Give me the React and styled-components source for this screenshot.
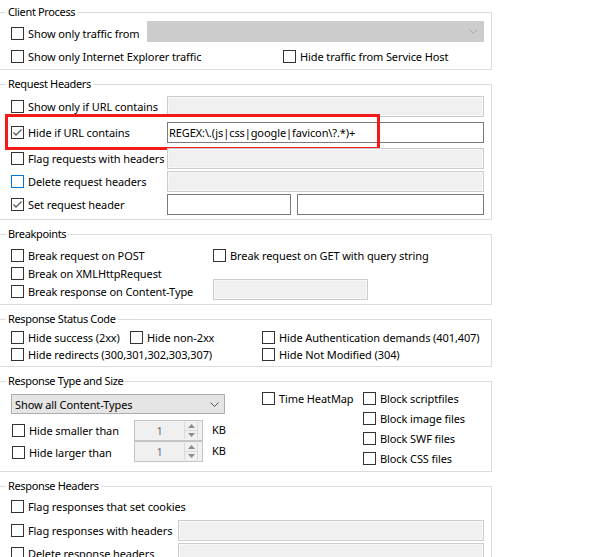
import React from 'react'
import styled, { createGlobalStyle } from 'styled-components'

const GlobalStyle = createGlobalStyle`
    body {
        margin: 0;
        background: #ffffff;
        font-family: "Noto Sans", "DejaVu Sans", sans-serif;
        font-size: 11px;
        letter-spacing: -0.1px;
        color: #000000;
    }
`

function Check({checked, focus}) {
    return (
        <Box $focus={focus}>
            {checked && (
                <svg width="11" height="11" viewBox="0 0 11 11">
                    <polyline points="1.5,5.5 4,8 9.5,2.5" fill="none" stroke="#5a5a5a" strokeWidth="1.3"/>
                </svg>
            )}
        </Box>
    )
}

function CheckLabel({w, checked, focus, top, children}) {
    return (
        <Label $w={w} $top={top}>
            <Check checked={checked} focus={focus}/>
            <span>{children}</span>
        </Label>
    )
}

function Chevron({color}) {
    return (
        <svg width="9" height="5" viewBox="0 0 9 5">
            <polyline points="0.5,0.5 4.5,4.5 8.5,0.5" fill="none" stroke={color} strokeWidth="1"/>
        </svg>
    )
}

function Spinner({value}) {
    return (
        <Spin>
            <SpinValue>{value}</SpinValue>
            <SpinButtons>
                <SpinHalf>
                    <svg width="7" height="4" viewBox="0 0 7 4"><polygon points="0,4 3.5,0 7,4" fill="#8c8c8c"/></svg>
                </SpinHalf>
                <SpinHalf>
                    <svg width="7" height="4" viewBox="0 0 7 4"><polygon points="0,0 3.5,4 7,0" fill="#8c8c8c"/></svg>
                </SpinHalf>
            </SpinButtons>
        </Spin>
    )
}

function App() {
    return (
        <>
            <GlobalStyle/>
            <Page>
                <Group>
                    <Title>Client Process</Title>
                    <Body $pb={6}>
                        <Row $h={21} $mt={2}>
                            <CheckLabel w={136} top={4}>Show only traffic from</CheckLabel>
                            <Combo><Chevron color="#a9a9a9"/></Combo>
                        </Row>
                        <Row $h={13} $mt={8}>
                            <CheckLabel w={272}>Show only Internet Explorer traffic</CheckLabel>
                            <CheckLabel>Hide traffic from Service Host</CheckLabel>
                        </Row>
                    </Body>
                </Group>

                <Group>
                    <Title>Request Headers</Title>
                    <Body $pb={4}>
                        <Row $h={21} $mt={5}>
                            <CheckLabel w={156}>Show only if URL contains</CheckLabel>
                            <Field $disabled/>
                        </Row>
                        <Row $h={21} $mt={5}>
                            <CheckLabel w={156} checked>Hide if URL contains</CheckLabel>
                            <Field>REGEX:\.(js|css|google|favicon\?.*)+</Field>
                            <Highlight/>
                        </Row>
                        <Row $h={21} $mt={5}>
                            <CheckLabel w={156}>Flag requests with headers</CheckLabel>
                            <Field $disabled/>
                        </Row>
                        <Row $h={21} $mt={2}>
                            <CheckLabel w={156} focus>Delete request headers</CheckLabel>
                            <Field $disabled/>
                        </Row>
                        <Row $h={21} $mt={2}>
                            <CheckLabel w={156} checked>Set request header</CheckLabel>
                            <Field $w={124}/>
                            <Field $ml={6}/>
                        </Row>
                    </Body>
                </Group>

                <Group>
                    <Title>Breakpoints</Title>
                    <Body $pb={4}>
                        <Row $h={17} $mt={6}>
                            <CheckLabel w={202}>Break request on POST</CheckLabel>
                            <CheckLabel>Break request on GET with query string</CheckLabel>
                        </Row>
                        <Row $h={17} $mt={1}>
                            <CheckLabel w={202}>Break on XMLHttpRequest</CheckLabel>
                        </Row>
                        <Row $h={21} $mt={-3}>
                            <CheckLabel w={202} top={4}>Break response on Content-Type</CheckLabel>
                            <Field $disabled $w={155}/>
                        </Row>
                    </Body>
                </Group>

                <Group>
                    <Title>Response Status Code</Title>
                    <Body $pb={3}>
                        <Row $h={17} $mt={3}>
                            <CheckLabel w={119}>Hide success (2xx)</CheckLabel>
                            <CheckLabel w={132}>Hide non-2xx</CheckLabel>
                            <CheckLabel>Hide Authentication demands (401,407)</CheckLabel>
                        </Row>
                        <Row $h={17}>
                            <CheckLabel w={251}>Hide redirects (300,301,302,303,307)</CheckLabel>
                            <CheckLabel>Hide Not Modified (304)</CheckLabel>
                        </Row>
                    </Body>
                </Group>

                <Group>
                    <Title>Response Type and Size</Title>
                    <Body $pb={3}>
                        <TypeGrid>
                            <Column>
                                <Select>
                                    <span>Show all Content-Types</span>
                                    <Chevron color="#505050"/>
                                </Select>
                                <Row $h={21} $mt={6} $ml={1}>
                                    <CheckLabel w={122}>Hide smaller than</CheckLabel>
                                    <Spinner value="1"/>
                                    <Unit>KB</Unit>
                                </Row>
                                <Row $h={21} $ml={1}>
                                    <CheckLabel w={122} top={2}>Hide larger than</CheckLabel>
                                    <Spinner value="1"/>
                                    <Unit>KB</Unit>
                                </Row>
                            </Column>
                            <Column>
                                <Row $h={20}>
                                    <CheckLabel>Time HeatMap</CheckLabel>
                                </Row>
                            </Column>
                            <Column>
                                <Row $h={20}><CheckLabel>Block scriptfiles</CheckLabel></Row>
                                <Row $h={20}><CheckLabel>Block image files</CheckLabel></Row>
                                <Row $h={20}><CheckLabel>Block SWF files</CheckLabel></Row>
                                <Row $h={20}><CheckLabel>Block CSS files</CheckLabel></Row>
                            </Column>
                        </TypeGrid>
                    </Body>
                </Group>

                <Group>
                    <Title>Response Headers</Title>
                    <Body $pb={8}>
                        <Row $h={17} $mt={5}>
                            <CheckLabel>Flag responses that set cookies</CheckLabel>
                        </Row>
                        <Row $h={21} $mt={5}>
                            <CheckLabel w={167}>Flag responses with headers</CheckLabel>
                            <Field $disabled/>
                        </Row>
                        <Row $h={21} $mt={2}>
                            <CheckLabel w={167}>Delete response headers</CheckLabel>
                            <Field $disabled/>
                        </Row>
                    </Body>
                </Group>
            </Page>
        </>
    )
}

const Page = styled.div`
    width: 493px;
    margin-left: -1px;
    padding-top: 12px;
`

const Group = styled.div`
    border: 1px solid #dcdcdc;
    & + & {
        margin-top: 14px;
    }
`

const Title = styled.div`
    display: table;
    margin: -8px 0 0 6px;
    padding: 0 2px;
    height: 14px;
    line-height: 14px;
    letter-spacing: -0.35px;
    background: #ffffff;
`

const Body = styled.div`
    padding: 0 7px ${p => p.$pb}px 11px;
`

const Row = styled.div`
    position: relative;
    display: flex;
    align-items: center;
    height: ${p => p.$h}px;
    margin-top: ${p => p.$mt || 0}px;
    margin-left: ${p => p.$ml || 0}px;
`

const Label = styled.label`
    display: flex;
    align-items: center;
    gap: 4px;
    flex-shrink: 0;
    width: ${p => (p.$w ? `${p.$w}px` : 'auto')};
    margin-top: ${p => p.$top || 0}px;
    white-space: nowrap;
    line-height: 15px;
`

const Box = styled.span`
    display: flex;
    align-items: center;
    justify-content: center;
    width: 13px;
    height: 13px;
    box-sizing: border-box;
    border: 1px solid ${p => (p.$focus ? '#0078d7' : '#333333')};
    background: #ffffff;
    flex-shrink: 0;
`

const Field = styled.div`
    box-sizing: border-box;
    height: 100%;
    flex: ${p => (p.$w ? `0 0 ${p.$w}px` : '1')};
    margin-left: ${p => p.$ml || 0}px;
    border: 1px solid ${p => (p.$disabled ? '#cccccc' : '#7a7a7a')};
    background: ${p => (p.$disabled ? '#f0f0f0' : '#ffffff')};
    box-shadow: ${p => (p.$disabled ? 'inset 0 0 0 1px #f8f8f8' : 'none')};
    padding: 0 1px;
    line-height: 19px;
    white-space: nowrap;
    overflow: hidden;
`

const Highlight = styled.span`
    position: absolute;
    left: -6px;
    top: -8px;
    width: 375px;
    height: 36px;
    box-sizing: border-box;
    border: 3px solid #f21a1a;
    pointer-events: none;
`

const Combo = styled.div`
    flex: 1;
    height: 100%;
    box-sizing: border-box;
    border: 1px solid #cccccc;
    background: #cccccc;
    display: flex;
    align-items: center;
    justify-content: flex-end;
    padding-right: 5px;
`

const TypeGrid = styled.div`
    display: grid;
    grid-template-columns: 251px 101px 1fr;
    align-items: start;
`

const Column = styled.div`
    display: flex;
    flex-direction: column;
`

const Select = styled.div`
    width: 214px;
    height: 20px;
    margin-top: 6px;
    box-sizing: border-box;
    border: 1px solid #adadad;
    background: #e5e5e5;
    display: flex;
    align-items: center;
    justify-content: space-between;
    padding: 0 5px 0 3px;
`

const Spin = styled.div`
    width: 69px;
    height: 100%;
    box-sizing: border-box;
    border: 1px solid #c4c4c4;
    background: #f0f0f0;
    display: flex;
    align-items: stretch;
    padding: 1px 4px 1px 0;
`

const SpinValue = styled.span`
    flex: 1;
    text-align: center;
    line-height: 17px;
    color: #6d6d6d;
`

const SpinButtons = styled.div`
    width: 12px;
    display: flex;
    flex-direction: column;
    border-left: 1px solid #dadada;
    border-right: 1px solid #dadada;
`

const SpinHalf = styled.span`
    flex: 1;
    display: flex;
    align-items: center;
    justify-content: center;
    & + & {
        border-top: 1px solid #dadada;
    }
`

const Unit = styled.span`
    margin-left: 9px;
    margin-top: -2px;
`

export default App;
